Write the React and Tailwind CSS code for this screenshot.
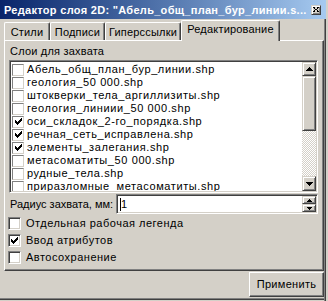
import React from "react";

const items = [
  ["Абель_общ_план_бур_линии.shp", false],
  ["геология_50 000.shp", false],
  ["штокверки_тела_аргиллизиты.shp", false],
  ["геология_линиии_50 000.shp", false],
  ["оси_складок_2-го_порядка.shp", true],
  ["речная_сеть_исправлена.shp", true],
  ["элементы_залегания.shp", true],
  ["метасоматиты_50 000.shp", false],
  ["рудные_тела.shp", false],
  ["приразломные_метасоматиты.shp", false],
];

function Check() {
  return (
    <svg width="7" height="7" viewBox="0 0 7 7" shapeRendering="crispEdges">
      <path
        fill="#000"
        d="M6 0h1v1h-1z M5 1h2v1h-2z M0 2h1v1h-1z M4 2h3v1h-3z M0 3h2v1h-2z M3 3h3v1h-3z M0 4h5v1h-5z M1 5h3v1h-3z M2 6h1v1h-1z"
      />
    </svg>
  );
}

function Arrow({ up, w = 7 }) {
  const h = Math.ceil(w / 2);
  const rows = [];
  for (let i = 0; i < h; i++) {
    const len = 1 + i * 2;
    const x = (w - len) / 2;
    const y = up ? i : h - 1 - i;
    rows.push(`M${x} ${y}h${len}v1h-${len}z`);
  }
  return (
    <svg width={w} height={h} viewBox={`0 0 ${w} ${h}`} shapeRendering="crispEdges">
      <path fill="#000" d={rows.join(" ")} />
    </svg>
  );
}

const raised =
  "border border-t-[#d4d0c8] border-l-[#d4d0c8] border-r-[#404040] border-b-[#404040] shadow-[inset_1px_1px_#ffffff,inset_-1px_-1px_#808080] bg-[#d4d0c8]";
const sunken =
  "border border-t-[#808080] border-l-[#808080] border-r-white border-b-white shadow-[inset_1px_1px_#404040,inset_-1px_-1px_#d4d0c8]";

function BigCheck({ checked, label }) {
  return (
    <div className="flex items-center h-[13px] gap-[5px]">
      <div className={`w-[13px] h-[13px] bg-white flex items-center justify-center ${sunken}`}>
        {checked && <Check />}
      </div>
      <span className="leading-[13px] tracking-[0.5px] whitespace-nowrap">{label}</span>
    </div>
  );
}

function Tab({ w, label, active }) {
  return (
    <div
      className={`${w} flex items-center justify-center border-l border-t border-r border-l-white border-t-white border-r-[#404040] rounded-tl-[2px] rounded-tr-[2px] shadow-[inset_-1px_0_#808080] bg-[#d4d0c8] tracking-[0.2px] whitespace-nowrap ${
        active ? "h-[21px] -mb-[1px] relative z-10 pb-[3px]" : "h-[18px] pt-[1px]"
      }`}
    >
      {label}
    </div>
  );
}

export default function App() {
  return (
    <div
      className="w-[328px] h-[301px] bg-[#d4d0c8] overflow-hidden flex flex-col text-[11px] text-black"
      style={{ fontFamily: '"Liberation Sans", Arial, sans-serif' }}
    >
      {/* title bar */}
      <div className="w-[326px] h-[19px] bg-linear-to-r from-[#0a246a] to-[#a6caf0] flex items-center pl-[4px] pr-[5px]">
        <span className="flex-1 text-white font-bold text-[11px] tracking-[0.3px] whitespace-nowrap overflow-hidden leading-[19px] pt-[1px]">
          Редактор слоя 2D: "Абель_общ_план_бур_линии.s...
        </span>
        <div className={`w-[10px] h-[10px] flex items-center justify-center ${raised}`}>
          <svg width="6" height="5" viewBox="0 0 6 5" shapeRendering="crispEdges">
            <path
              fill="#000"
              d="M0 0h2v1h-2z M4 0h2v1h-2z M1 1h1v1h-1z M4 1h1v1h-1z M2 2h2v1h-2z M1 3h1v1h-1z M4 3h1v1h-1z M0 4h2v1h-2z M4 4h2v1h-2z"
            />
          </svg>
        </div>
      </div>

      <div className="flex flex-1">
        <div className="w-[324px] flex flex-col">
          {/* tabs */}
          <div className="mt-[1px] h-[20px] flex items-end pl-[4px]">
            <Tab w="w-[46px]" label="Стили" />
            <Tab w="w-[55px]" label="Подписи" />
            <Tab w="w-[76px]" label="Гиперссылки" />
            <Tab w="w-[99px]" label="Редактирование" active />
          </div>

          {/* panel */}
          <div className="ml-[4px] w-[320px] h-[231px] border border-t-white border-l-white border-r-[#404040] border-b-[#404040] shadow-[inset_-1px_-1px_#808080] flex flex-col">
            <div className="mt-[4px] ml-[5px] h-[13px] leading-[13px] tracking-[0.2px]">Слои для захвата</div>

            {/* list box */}
            <div className={`mt-[2px] ml-[4px] w-[309px] h-[133px] bg-white flex ${sunken} p-[1px]`}>
              <div className="flex-1 overflow-hidden pt-[1px]">
                {items.map(([name, checked]) => (
                  <div key={name} className="h-[13px] flex items-center pl-[1px] gap-[3px]">
                    <div className="w-[12px] h-[12px] border border-t-[#808080] border-l-[#808080] border-r-[#d4d0c8] border-b-[#d4d0c8] bg-white flex items-center justify-center shrink-0">
                      {checked && <Check />}
                    </div>
                    <span className="leading-[13px] whitespace-nowrap tracking-[0.6px]">{name}</span>
                  </div>
                ))}
              </div>
              {/* scrollbar */}
              <div className="w-[14px] flex flex-col">
                <div className={`h-[14px] flex items-center justify-center ${raised}`}>
                  <Arrow up />
                </div>
                <div className={`h-[55px] ${raised}`} />
                <div className="flex-1 bg-[repeating-conic-gradient(#ffffff_0_25%,#d4d0c8_0_50%)] bg-[length:2px_2px]" />
                <div className={`h-[15px] flex items-center justify-center ${raised}`}>
                  <Arrow />
                </div>
              </div>
            </div>

            {/* radius */}
            <div className="mt-[1px] ml-[4px] w-[309px] h-[20px] flex items-center">
              <div className="w-[107px] shrink-0 pl-[1px] leading-[13px] pt-[1px] whitespace-nowrap">Радиус захвата, мм:</div>
              <div className={`flex-1 h-[20px] bg-white flex items-center p-[1px] ${sunken}`}>
                <div className="flex-1 flex items-center pl-[2px] h-full">
                  <div className="w-[1px] h-[13px] bg-black" />
                  <span className="leading-[13px]">1</span>
                </div>
                <div className="w-[14px] h-full flex flex-col">
                  <div className={`flex-1 flex items-center justify-center ${raised}`}>
                    <Arrow up w={5} />
                  </div>
                  <div className={`flex-1 flex items-center justify-center ${raised}`}>
                    <Arrow w={5} />
                  </div>
                </div>
              </div>
            </div>

            <div className="mt-[3px] ml-[3px] flex flex-col gap-[4px]">
              <BigCheck label="Отдельная рабочая легенда" />
              <BigCheck label="Ввод атрибутов" checked />
              <BigCheck label="Автосохранение" />
            </div>
          </div>

          {/* button row */}
          <div className="flex justify-end mt-[1px]">
            <div className="w-[75px] h-[25px] border border-t-white border-l-white border-r-[#404040] border-b-[#404040] shadow-[inset_-1px_-1px_#808080] flex items-center justify-center tracking-[0.3px]">
              Применить
            </div>
          </div>
          <div className="mt-[1px] h-[1px] bg-[#808080]" />
          <div className="h-[1px] bg-[#404040]" />
        </div>
        <div className="w-[1px] bg-[#808080]" />
        <div className="w-[1px] bg-[#404040]" />
      </div>
    </div>
  );
}
